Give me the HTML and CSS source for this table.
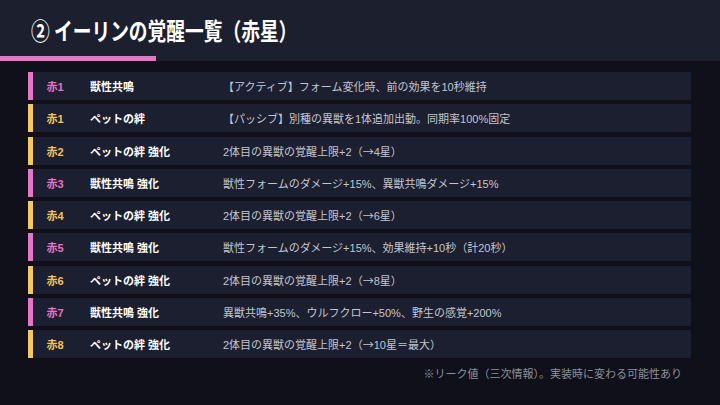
FILE: index.html
```html
<!DOCTYPE html>
<html lang="ja">
<head>
<meta charset="utf-8">
<link rel="stylesheet" href="styles.css">
</head>
<body>
<div class="page">
  <header class="header">
    <h1 class="title"><span class="title-text">② イーリンの覚醒一覧（赤星）</span></h1>
    <div class="accent"></div>
  </header>
  <main class="list">
    <div class="row pink"><span class="lv">赤1</span><span class="name">獣性共鳴</span><span class="desc">【アクティブ】フォーム変化時、前の効果を10秒維持</span></div>
    <div class="row yellow"><span class="lv">赤1</span><span class="name">ペットの絆</span><span class="desc">【パッシブ】別種の異獣を1体追加出動。同期率100%固定</span></div>
    <div class="row yellow"><span class="lv">赤2</span><span class="name">ペットの絆 強化</span><span class="desc">2体目の異獣の覚醒上限+2（<span class="cjk">→</span>4星）</span></div>
    <div class="row pink"><span class="lv">赤3</span><span class="name">獣性共鳴 強化</span><span class="desc">獣性フォームのダメージ+15%、異獣共鳴ダメージ+15%</span></div>
    <div class="row yellow"><span class="lv">赤4</span><span class="name">ペットの絆 強化</span><span class="desc">2体目の異獣の覚醒上限+2（<span class="cjk">→</span>6星）</span></div>
    <div class="row pink"><span class="lv">赤5</span><span class="name">獣性共鳴 強化</span><span class="desc">獣性フォームのダメージ+15%、効果維持+10秒（計20秒）</span></div>
    <div class="row yellow"><span class="lv">赤6</span><span class="name">ペットの絆 強化</span><span class="desc">2体目の異獣の覚醒上限+2（<span class="cjk">→</span>8星）</span></div>
    <div class="row pink"><span class="lv">赤7</span><span class="name">獣性共鳴 強化</span><span class="desc">異獣共鳴+35%、ウルフクロー+50%、野生の感覚+200%</span></div>
    <div class="row yellow"><span class="lv">赤8</span><span class="name">ペットの絆 強化</span><span class="desc">2体目の異獣の覚醒上限+2（<span class="cjk">→</span>10星＝最大）</span></div>
    <p class="note">※リーク値（三次情報）。実装時に変わる可能性あり</p>
  </main>
</div>
</body>
</html>
```
FILE: styles.css
```css
* { box-sizing: border-box; }
html, body { margin: 0; padding: 0; }
body {
  width: 720px;
  height: 405px;
  background: #0f1019;
  font-family: "Liberation Sans", "Noto Sans CJK JP", sans-serif;
  overflow: hidden;
}
.page { width: 720px; height: 405px; }
.header {
  height: 61px;
  background: #1c1f2e;
  display: flex;
  flex-direction: column;
}
.title {
  margin: 0;
  height: 56px;
  padding-left: 31px;
  display: flex;
  align-items: center;
  color: #ffffff;
  font-family: "Noto Sans CJK JP", sans-serif;
  font-size: 24px;
  font-weight: 700;
  line-height: 1;
}
.title-text {
  display: inline-block;
  transform: scaleX(0.78);
  transform-origin: left center;
  white-space: nowrap;
  padding-top: 4px;
}
.accent {
  width: 156px;
  height: 5px;
  background: #e575c6;
}
.list {
  padding: 11px 0 0 28px;
  display: flex;
  flex-direction: column;
  gap: 4.3px;
}
.row {
  width: 663px;
  height: 28px;
  background: #1c1f2f;
  border-left: 5px solid #e575c6;
  display: flex;
  align-items: center;
  font-size: 11px;
  white-space: nowrap;
}
.row.yellow { border-left-color: #f4c862; }
.lv {
  width: 57px;
  padding-left: 13.5px;
  font-weight: 700;
}
.pink .lv { color: #e574c6; }
.yellow .lv { color: #f2c35e; }
.name {
  width: 133px;
  color: #ffffff;
  font-weight: 700;
}
.desc {
  color: #c3c6d0;
}
.cjk {
  font-family: "Noto Sans CJK JP", sans-serif;
}
.note {
  margin: 2px 0 0 0;
  width: 654px;
  text-align: right;
  font-size: 11px;
  color: #8d909c;
}
```
